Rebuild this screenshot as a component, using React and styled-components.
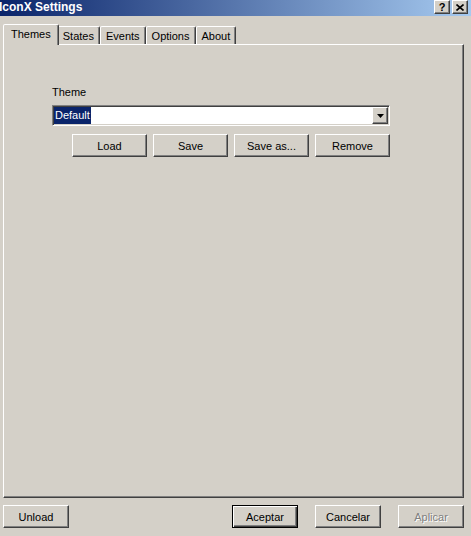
import React from 'react';
import styled, {createGlobalStyle, css} from 'styled-components';

const GlobalStyle = createGlobalStyle`
  html, body {
    margin: 0;
    padding: 0;
    background: #d4d0c8;
  }
  body {
    font-family: Tahoma, "Liberation Sans", Arial, sans-serif;
    font-size: 11px;
    color: #000;
  }
`;

const Window = styled.div`
  width: 471px;
  height: 536px;
  display: flex;
  flex-direction: column;
  background: #d4d0c8;
  overflow: hidden;
`;

const TitleBar = styled.header`
  height: 16px;
  flex: none;
  display: flex;
  align-items: flex-start;
  justify-content: space-between;
  padding-right: 3px;
  background: linear-gradient(to right, #0a246a 0%, #a6caf0 100%);
`;

const Title = styled.h1`
  margin: 0 0 0 -1px;
  font-size: 12px;
  font-weight: bold;
  line-height: 15px;
  color: #fff;
  white-space: nowrap;
`;

const CaptionButtons = styled.div`
  display: flex;
  gap: 2px;
`;

const raised = css`
  border: 1px solid;
  border-color: #fff #404040 #404040 #fff;
  box-shadow: inset -1px -1px #808080;
  background: #d4d0c8;
`;

const CaptionButton = styled.span`
  ${raised};
  box-sizing: border-box;
  width: 16px;
  height: 14px;
  display: flex;
  align-items: center;
  justify-content: center;
  font-weight: bold;
  font-size: 11px;
  line-height: 1;
  color: #000;
`;

const Body = styled.div`
  flex: 1;
  display: flex;
  flex-direction: column;
  padding: 8px 7px 0 3px;
  min-height: 0;
`;

const TabStrip = styled.div`
  height: 20px;
  flex: none;
  display: flex;
  align-items: flex-end;
  padding-left: 2px;
`;

const Tab = styled.div`
  position: relative;
  box-sizing: border-box;
  height: 18px;
  padding: 0 5px;
  display: flex;
  align-items: center;
  border: 1px solid;
  border-bottom: none;
  border-color: #fff #404040 transparent #fff;
  border-radius: 2px 2px 0 0;
  box-shadow: inset -1px 0 #808080;
  background: #d4d0c8;
  white-space: nowrap;

  ${({active}) =>
    active &&
    css`
      height: 21px;
      margin: 0 -2px -1px;
      padding: 0 7px 2px;
      z-index: 1;
    `};
`;

const Panel = styled.section`
  flex: 1;
  min-height: 0;
  border: 1px solid;
  border-color: #fff #404040 #404040 #fff;
  box-shadow: inset -1px -1px #808080;
  padding: 41px 0 0 48px;
`;

const Field = styled.div`
  width: 338px;
  display: flex;
  flex-direction: column;
`;

const Label = styled.label`
  line-height: 13px;
  margin-bottom: 6px;
`;

const Combo = styled.div`
  box-sizing: border-box;
  height: 21px;
  display: flex;
  border: 1px solid;
  border-color: #808080 #fff #fff #808080;
  box-shadow: inset 1px 1px #404040, inset -1px -1px #d4d0c8;
  padding: 1px;
  background: #fff;
`;

const ComboValue = styled.span`
  flex: 1;
  display: flex;
  align-items: stretch;
`;

const Selected = styled.span`
  background: #0a246a;
  color: #fff;
  padding: 0 1px;
  display: flex;
  align-items: center;
  line-height: 13px;
`;

const DropButton = styled.span`
  ${raised};
  box-sizing: border-box;
  width: 16px;
  display: flex;
  align-items: center;
  justify-content: center;
`;

const ButtonRow = styled.div`
  display: flex;
  gap: 6px;
  margin: 8px 0 0 20px;
`;

const Button = styled.button`
  ${raised};
  box-sizing: border-box;
  width: ${({w}) => w || 75}px;
  height: 23px;
  padding: 0;
  font: inherit;
  color: #000;
  display: flex;
  align-items: center;
  justify-content: center;

  ${({primary}) =>
    primary &&
    css`
      border-color: #000;
      box-shadow: inset 1px 1px #fff, inset -1px -1px #404040,
        inset -2px -2px #808080;
    `};

  ${({disabled}) =>
    disabled &&
    css`
      color: #808080;
      text-shadow: 1px 1px #fff;
    `};
`;

const Footer = styled.footer`
  flex: none;
  display: flex;
  align-items: center;
  padding: 7px 0 8px;
`;

const FooterRight = styled.div`
  margin-left: auto;
  display: flex;
  gap: 17px;
`;

function Arrow() {
  return (
    <svg width="7" height="4" viewBox="0 0 7 4">
      <path d="M0 0h7L3.5 4z" fill="#000" />
    </svg>
  );
}

function CloseGlyph() {
  return (
    <svg width="8" height="7" viewBox="0 0 8 7">
      <path d="M0.5 0.5L7.5 6.5M7.5 0.5L0.5 6.5" stroke="#000" strokeWidth="1.6" />
    </svg>
  );
}

const tabs = ['Themes', 'States', 'Events', 'Options', 'About'];

export default function App() {
  return (
    <Window>
      <GlobalStyle />
      <TitleBar>
        <Title>IconX Settings</Title>
        <CaptionButtons>
          <CaptionButton>?</CaptionButton>
          <CaptionButton>
            <CloseGlyph />
          </CaptionButton>
        </CaptionButtons>
      </TitleBar>
      <Body>
        <TabStrip>
          {tabs.map((t, i) => (
            <Tab key={t} active={i === 0}>
              {t}
            </Tab>
          ))}
        </TabStrip>
        <Panel>
          <Field>
            <Label>Theme</Label>
            <Combo>
              <ComboValue>
                <Selected>Default</Selected>
              </ComboValue>
              <DropButton>
                <Arrow />
              </DropButton>
            </Combo>
            <ButtonRow>
              <Button>Load</Button>
              <Button>Save</Button>
              <Button>Save as...</Button>
              <Button>Remove</Button>
            </ButtonRow>
          </Field>
        </Panel>
        <Footer>
          <Button w={66}>Unload</Button>
          <FooterRight>
            <Button w={66} primary>
              Aceptar
            </Button>
            <Button w={66}>Cancelar</Button>
            <Button w={66} disabled>
              Aplicar
            </Button>
          </FooterRight>
        </Footer>
      </Body>
    </Window>
  );
}
